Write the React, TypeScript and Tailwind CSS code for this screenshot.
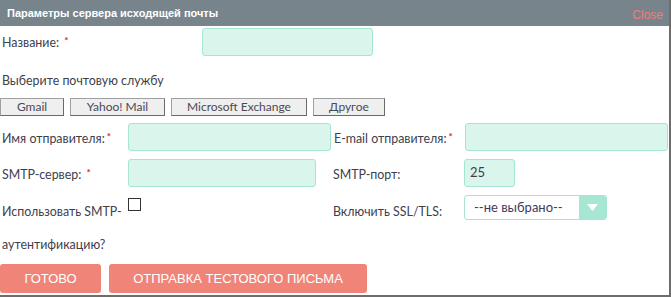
import React from "react";

// mint inputs + salmon actions, as in the SMTP settings dialog
const field = "h-[28px] rounded-[3px] border border-[#a6e5d1] bg-[#d9f5ec]";
const label = "text-[12.4px] leading-[16px] text-[#40404c]";

function Req() {
  return <span className="relative -top-[3px] ml-[2px] text-[10px] font-bold text-[#e0262b]">*</span>;
}

const services = [
  { name: "Gmail", w: "w-[64px]" },
  { name: "Yahoo! Mail", w: "w-[95px]" },
  { name: "Microsoft Exchange", w: "w-[136px]" },
  { name: "Другое", w: "w-[72px]" },
];

export default function App() {
  return (
    <div className="h-[298px] w-[671px] overflow-hidden bg-white font-['Lato','Liberation_Sans',sans-serif]">
      <div className="flex h-[297px] w-[671px] flex-col border-b-2 border-r-2 border-[#6d6d6d]">
        {/* title bar */}
        <div className="flex h-[26px] shrink-0 items-center justify-between bg-[#78848c] pl-[7px] pr-[6px]">
          <span className="font-['Liberation_Sans',Arial,sans-serif] text-[11px] font-bold text-white">
            Параметры сервера исходящей почты
          </span>
          <span className="mt-[4px] font-['Liberation_Sans',Arial,sans-serif] text-[12px] text-[#f07e78]">Close</span>
        </div>

        <div className="flex flex-col pl-[2px]">
          <div className="mt-[2px] flex items-center">
            <div className={`${label} w-[200px] pt-[2px]`}>
              Название: <Req />
            </div>
            <div className={`${field} w-[171px]`} />
          </div>

          <div className={`${label} mt-[17px]`}>Выберите почтовую службу</div>

          <div className="-ml-[2px] mt-[9px] flex gap-[6px]">
            {services.map((s) => (
              <button
                key={s.name}
                className={`${s.w} h-[18px] border border-[#a0a0a0] border-b-[#6a6a6a] border-r-[#6a6a6a] bg-[#efefef] text-[12px] leading-[16px] text-[#4a4a55]`}
              >
                {s.name}
              </button>
            ))}
          </div>

          {/* sender rows */}
          <div className="mt-[7px] flex items-center">
            <div className={`${label} w-[126px] pt-[4px]`}>
              Имя отправителя:<Req />
            </div>
            <div className={`${field} w-[203px]`} />
            <div className={`${label} ml-[3px] w-[131px] pt-[4px]`}>
              E-mail отправителя:<Req />
            </div>
            <div className={`${field} w-[203px]`} />
          </div>

          <div className="mt-[8px] flex items-center">
            <div className={`${label} w-[126px] pt-[4px]`}>
              SMTP-сервер: <Req />
            </div>
            <div className={`${field} w-[188px]`} />
            <div className={`${label} ml-[17px] w-[131px] pt-[4px]`}>SMTP-порт:</div>
            <div className={`${field} flex w-[51px] items-center pl-[5px] text-[13px] text-[#3d3d4a]`}>25</div>
          </div>

          <div className="mt-[8px] flex items-start">
            <div className={`${label} w-[126px] pt-[9px]`}>Использовать SMTP-</div>
            <div className="mt-[3px] h-[13px] w-[13px] border-[1.5px] border-[#333]" />
            <div className={`${label} ml-[192px] w-[131px] pt-[9px]`}>Включить SSL/TLS:</div>
            <div className="flex h-[25px] w-[143px] overflow-hidden rounded-[3px] border border-[#a6e5d1] bg-white">
              <span className="flex-1 pl-[9px] text-[13px] leading-[23px] text-[#3b3b5c]">--не выбрано--</span>
              <span className="flex w-[27px] items-center justify-center bg-[#a6e6d3]">
                <svg width="11" height="7" viewBox="0 0 11 7">
                  <path d="M0 0h11L5.5 7z" fill="#fff" />
                </svg>
              </span>
            </div>
          </div>

          <div className={`${label} mt-[17px]`}>аутентификацию?</div>

          <div className="-ml-[2px] mt-[11px] flex gap-[8px]">
            <button className="h-[29px] w-[101px] rounded-[3px] bg-[#f08479] font-['Liberation_Sans',Arial,sans-serif] text-[13px] text-white">
              ГОТОВО
            </button>
            <button className="h-[29px] w-[258px] rounded-[3px] bg-[#f08479] font-['Liberation_Sans',Arial,sans-serif] text-[13px] text-white">
              ОТПРАВКА ТЕСТОВОГО ПИСЬМА
            </button>
          </div>
        </div>
      </div>
    </div>
  );
}
